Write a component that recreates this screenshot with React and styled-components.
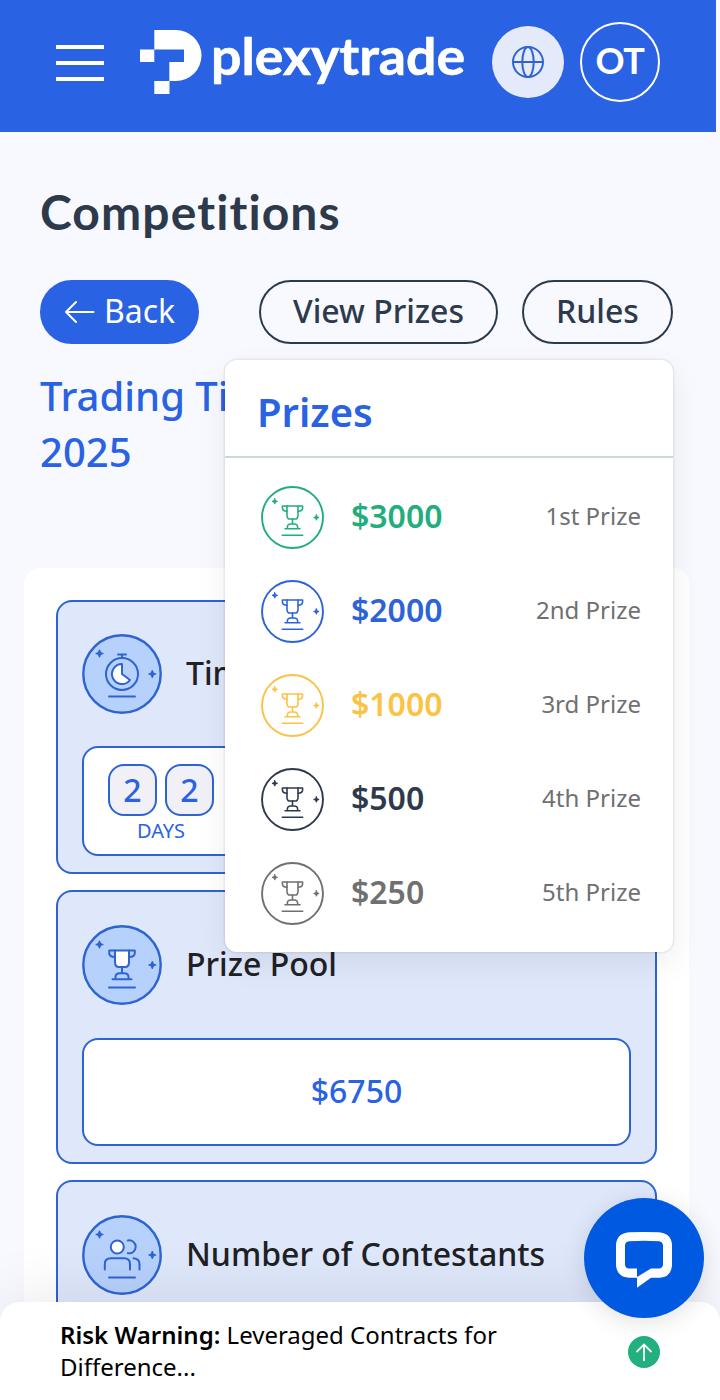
import React from 'react';
import styled, { createGlobalStyle } from 'styled-components';

const Blue = '#2962e3';
const Line_Blue = '#2d64d2';
const Text_Dark = '#2d3a4c';
const Card_Blue = '#dfe7fb';

const GlobalStyle = createGlobalStyle`
    * {
        box-sizing: border-box;
    }
    body {
        margin: 0;
        background: #f8f9fe;
        font-family: 'Noto Sans', 'Open Sans', sans-serif;
    }
`;
const Page = styled.div`
    position: relative;
    width: 720px;
    height: 1400px;
    overflow: hidden;
`;
const Header = styled.header`
    display: flex;
    align-items: center;
    width: 716px;
    height: 132px;
    padding: 0 56px 8px;
    background: ${Blue};
`;
const Burger = styled.div`
    display: flex;
    flex-direction: column;
    gap: 12px;
    width: 48px;
    margin: 2px 36px 0 0;
`;
const BurgerLine = styled.span`
    height: 4px;
    background: #fff;
`;
const Logo = styled.svg`
    display: block;
    width: 328px;
    height: 72px;
    flex: none;
`;
const Wordmark = styled.text`
    font-family: Lato, sans-serif;
    font-weight: 700;
    font-size: 51px;
    fill: #fff;
    stroke: #fff;
    stroke-width: 0.6px;
`;
const Language = styled.div`
    display: flex;
    align-items: center;
    justify-content: center;
    flex: none;
    width: 72px;
    height: 72px;
    margin: 0 16px 0 24px;
    border-radius: 50%;
    background: #e4eafa;
`;
const Avatar = styled.div`
    display: flex;
    align-items: center;
    justify-content: center;
    flex: none;
    width: 80px;
    height: 80px;
    padding-bottom: 4px;
    border: 2px solid #fff;
    border-radius: 50%;
    color: #fff;
    font: 700 36px Lato, sans-serif;
    letter-spacing: -0.5px;
`;
const Main = styled.main`
    padding: 52px 31px 0 24px;
`;
const Heading = styled.h1`
    margin: 0 16px;
    height: 56px;
    line-height: 55px;
    font-family: Lato, sans-serif;
    font-weight: 700;
    font-size: 48px;
    letter-spacing: 1.1px;
    color: ${Text_Dark};
`;
const ButtonRow = styled.div`
    position: relative;
    display: flex;
    gap: 24px;
    margin: 40px 16px 0;
`;
const Button = styled.button`
    display: flex;
    align-items: center;
    justify-content: center;
    gap: 8px;
    width: ${props => props.$width}px;
    height: 64px;
    padding: 0 0 3px;
    border: 2px solid ${props => props.$filled ? Blue : Text_Dark};
    border-radius: 32px;
    background: ${props => props.$filled ? Blue : 'transparent'};
    color: ${props => props.$filled ? '#fff' : Text_Dark};
    font-family: inherit;
    font-size: 32px;
    font-weight: ${props => props.$filled ? 400 : 500};
    margin-right: ${props => props.$filled ? 'auto' : 0};
`;
const Title = styled.h2`
    width: 420px;
    margin: 24px 16px 88px;
    color: ${Blue};
    font-size: 40px;
    font-weight: 500;
    line-height: 56px;
`;
const Panel = styled.section`
    display: flex;
    flex-direction: column;
    gap: 16px;
    padding: 32px;
    border-radius: 16px;
    background: #fff;
`;
const Card = styled.div`
    height: 274px;
    padding: ${props => props.$top || 33}px 24px 0;
    border: 2px solid ${Line_Blue};
    border-radius: 16px;
    background: ${Card_Blue};
`;
const CardHead = styled.div`
    display: flex;
    align-items: center;
    gap: 24px;
    height: 80px;
    color: #202124;
    font-size: 32px;
    font-weight: 500;
    white-space: nowrap;
`;
const CardName = styled.span`
    padding-bottom: 4px;
`;
const CardBody = styled.div`
    display: flex;
    align-items: center;
    justify-content: ${props => props.$start ? 'flex-start' : 'center'};
    height: ${props => props.$start ? 110 : 108}px;
    margin-top: ${props => props.$start ? 32 : 33}px;
    padding: ${props => props.$start ? '0 24px' : '0 0 4px'};
    border: 2px solid ${Line_Blue};
    border-radius: 16px;
    background: #fff;
    color: ${Blue};
    font-size: 32px;
    font-weight: 500;
`;
const Unit = styled.div`
    display: flex;
    flex-direction: column;
    align-items: center;
    padding-top: 7px;
`;
const Digits = styled.div`
    display: flex;
    gap: 8px;
`;
const Digit = styled.span`
    width: 49px;
    height: 52px;
    border: 2px solid ${Line_Blue};
    border-radius: 16px;
    background: #f0f0f6;
    line-height: 47px;
    text-align: center;
`;
const UnitName = styled.span`
    font-size: 20px;
    font-weight: 400;
    line-height: 30px;
`;
const Popup = styled.div`
    position: absolute;
    top: 80px;
    right: 0;
    width: 448px;
    height: 592px;
    border-radius: 12px;
    background: #fff;
    box-shadow: 0 0 0 1.5px rgba(0, 0, 0, 0.06), 0 12px 32px rgba(0, 0, 0, 0.07);
    z-index: 2;
`;
const PopupTitle = styled.h3`
    height: 98px;
    margin: 0 0 12px;
    padding: 8px 32px 0;
    border-bottom: 2px solid #ced8dc;
    color: ${Blue};
    font-size: 40px;
    font-weight: 600;
    line-height: 88px;
`;
const Prize = styled.div`
    display: flex;
    align-items: center;
    height: 94px;
    padding: 0 32px 0 36px;
    color: ${props => props.$color};
`;
const Amount = styled.span`
    flex: 1;
    margin-left: 27px;
    padding-bottom: 4px;
    font-size: 32px;
    font-weight: 600;
`;
const Place = styled.span`
    padding-bottom: 4px;
    color: #707070;
    font-size: 24px;
`;
const RiskBar = styled.footer`
    position: absolute;
    left: 0;
    right: 0;
    bottom: 0;
    display: flex;
    align-items: center;
    justify-content: space-between;
    height: 98px;
    padding: 2px 60px 0;
    border-radius: 20px 20px 0 0;
    background: #fff;
    box-shadow: 0 -8px 60px rgba(0, 0, 0, 0.08);
    z-index: 3;
`;
const RiskText = styled.p`
    width: 480px;
    margin: 0;
    padding-bottom: 2px;
    color: #000;
    font-size: 24px;
    line-height: 32px;
`;
const Bold = styled.b`
    font-weight: 600;
`;
const Chat = styled.div`
    position: absolute;
    left: 584px;
    top: 1198px;
    width: 120px;
    height: 120px;
    border-radius: 50%;
    background: #0059e1;
    box-shadow: 0 4px 24px rgba(0, 0, 0, 0.12);
    z-index: 4;
`;
const BlueIcon = styled.div`
    display: flex;
    color: ${Line_Blue};
`;

const prizes = [
    { amount: '$3000', place: '1st Prize', color: '#22ad7c' },
    { amount: '$2000', place: '2nd Prize', color: '#2d62d8' },
    { amount: '$1000', place: '3rd Prize', color: '#fbc243' },
    { amount: '$500', place: '4th Prize', color: '#2d3a4c' },
    { amount: '$250', place: '5th Prize', color: '#707070' },
];

// Round badge with two sparkles and a base line, shared by every icon
function Badge({ size, fill, children }) {
    return (
        <svg width={size} height={size} viewBox="0 0 80 80" fill="none" stroke="currentColor" strokeWidth="2" strokeLinecap="round" strokeLinejoin="round">
            <circle cx="40" cy="40" r="38.7" fill={fill || 'none'} strokeWidth="2.4"/>
            <path d="M17.5 16l1 2.5 2.5 1-2.5 1-1 2.500-1-2.500-2.500-1 2.500-1z" fill="currentColor" strokeWidth="1.2"/>
            <path d="M70.3 36.5l1 2.5 2.5 1-2.5 1-1 2.500-1-2.500-2.500-1 2.500-1z" fill="currentColor" strokeWidth="1.2"/>
            <path d="M27 62.5H53"/>
            {children}
        </svg>
    );
}
function BlueBadge({ children }) {
    return (
        <BlueIcon>
            <Badge size={80} fill="#b6d1fc">{children}</Badge>
        </BlueIcon>
    );
}
function Trophy({ fill }) {
    return (
        <>
            <path d="M33 25.5H47V37Q47 42 43 42H37Q33 42 33 37Z" fill={fill || 'none'}/>
            <path d="M33 25.5H27.2V28Q27.2 32 33 32M47 25.5H52.8V28Q52.8 32 47 32M40 42V48M30.5 54.3H49.5M33.5 54V52Q33.5 48.2 38 48.2H42Q46.5 48.2 46.5 52V54"/>
        </>
    );
}

function App() {
    return (
        <Page>
            <GlobalStyle/>
            <Header>
                <Burger>
                    <BurgerLine/>
                    <BurgerLine/>
                    <BurgerLine/>
                </Burger>
                <Logo viewBox="140 26 328 72">
                    <path fill="#fff" d="M154.3 30H176A25.5 25.5 0 0 1 176 81H169.3V62H184V49.5H154.3ZM140 49.5H154.3V62H140ZM154.3 81H169.5V94H154.3Z"/>
                    <Wordmark x="211" y="75" textLength="254" lengthAdjust="spacingAndGlyphs">plexytrade</Wordmark>
                </Logo>
                <Language>
                    <svg width="32" height="32" viewBox="0 0 32 32" fill="none" stroke={Line_Blue} strokeWidth="2">
                        <circle cx="16" cy="16" r="15"/>
                        <ellipse cx="16" cy="16" rx="5.7" ry="15"/>
                        <path d="M1 16H31"/>
                    </svg>
                </Language>
                <Avatar>OT</Avatar>
            </Header>
            <Main>
                <Heading>Competitions</Heading>
                <ButtonRow>
                    <Button $width={159} $filled>
                        <svg width="32" height="24" viewBox="0 0 32 24" fill="none" stroke="#fff" strokeWidth="2" strokeLinecap="round" strokeLinejoin="round">
                            <path d="M29.5 13H2M12 3L2 13L12 23"/>
                        </svg>
                        Back
                    </Button>
                    <Button $width={239}>View Prizes</Button>
                    <Button $width={151}>Rules</Button>
                    <Popup>
                        <PopupTitle>Prizes</PopupTitle>
                        {prizes.map(prize => (
                            <Prize key={prize.place} $color={prize.color}>
                                <Badge size={63}><Trophy/></Badge>
                                <Amount>{prize.amount}</Amount>
                                <Place>{prize.place}</Place>
                            </Prize>
                        ))}
                    </Popup>
                </ButtonRow>
                <Title>Trading Titans<br/>2025</Title>
                <Panel>
                    <Card $top={32}>
                        <CardHead>
                            <BlueBadge>
                                <circle cx="40" cy="40" r="16"/>
                                <path d="M36 20.5H44M40 20.5V24"/>
                                <path d="M40 30A10 10 0 1 0 48 46L40 40Z" fill="#fff"/>
                            </BlueBadge>
                            <CardName>Time Left</CardName>
                        </CardHead>
                        <CardBody $start>
                            <Unit>
                                <Digits>
                                    <Digit>2</Digit>
                                    <Digit>2</Digit>
                                </Digits>
                                <UnitName>DAYS</UnitName>
                            </Unit>
                        </CardBody>
                    </Card>
                    <Card>
                        <CardHead>
                            <BlueBadge><Trophy fill="#fff"/></BlueBadge>
                            <CardName>Prize Pool</CardName>
                        </CardHead>
                        <CardBody>$6750</CardBody>
                    </Card>
                    <Card>
                        <CardHead>
                            <BlueBadge>
                                <circle cx="35.3" cy="32" r="6.5" fill="#fff"/>
                                <path d="M45.8 25.5A6.5 6.5 0 1 1 45.8 38.2M22.8 54.5V49Q22.8 43.3 29 43.3H42Q48 43.3 48 49V54.5M51.5 43.3Q57.5 43.8 57.5 49V54.5"/>
                            </BlueBadge>
                            <CardName>Number of Contestants</CardName>
                        </CardHead>
                    </Card>
                </Panel>
            </Main>
            <RiskBar>
                <RiskText><Bold>Risk Warning:</Bold> Leveraged Contracts for Difference...</RiskText>
                <svg width="32" height="32" viewBox="0 0 32 32" fill="none" stroke="#fff" strokeWidth="1.8">
                    <circle cx="16" cy="16" r="16" fill="#22b07f" stroke="none"/>
                    <path d="M16 25V8.5M8.5 16L16 8.5L23.5 16"/>
                </svg>
            </RiskBar>
            <Chat>
                <svg width="120" height="120" viewBox="0 0 120 120">
                    <path fill="#fff" fillRule="evenodd" d="M45 34.3Q60 33.7 75 34.3Q87 35.3 88 46.5V67.5Q87 79 76 79.7H67L53 89.7V79.7H45Q33 79 32 67.5V46.5Q33 35.3 45 34.3ZM45 43.2Q41.3 43.5 41 47.500V66.500Q41.300 70.300 45 70.500H53V79L67 70.500H75Q78.700 70.200 79 66.500V47.500Q78.700 43.500 75 43.200Q60 42.500 45 43.200Z"/>
                </svg>
            </Chat>
        </Page>
    );
}

export default App;
